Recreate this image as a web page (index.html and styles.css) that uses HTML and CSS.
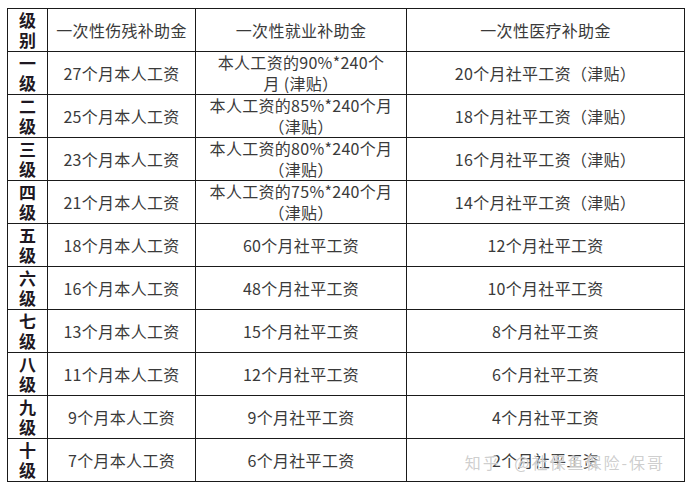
FILE: index.html
```html
<!DOCTYPE html>
<html lang="zh-CN">
<head>
<meta charset="utf-8">
<title>工伤补助金</title>
<link rel="stylesheet" href="styles.css">
</head>
<body>
<div class="wrap">
<table class="grid">
  <colgroup>
    <col class="c-level">
    <col class="c-a">
    <col class="c-b">
    <col class="c-c">
  </colgroup>
  <tr>
    <th class="lv">级<br>别</th>
    <td>一次性伤残补助金</td>
    <td>一次性就业补助金</td>
    <td>一次性医疗补助金</td>
  </tr>
  <tr>
    <th class="lv">一<br>级</th>
    <td>27个月本人工资</td>
    <td class="two">本人工资的90%*240个<br>月 (津贴）</td>
    <td>20个月社平工资（津贴）</td>
  </tr>
  <tr>
    <th class="lv">二<br>级</th>
    <td>25个月本人工资</td>
    <td class="two">本人工资的85%*240个月<br>（津贴）</td>
    <td>18个月社平工资（津贴）</td>
  </tr>
  <tr>
    <th class="lv">三<br>级</th>
    <td>23个月本人工资</td>
    <td class="two">本人工资的80%*240个月<br>（津贴）</td>
    <td>16个月社平工资（津贴）</td>
  </tr>
  <tr>
    <th class="lv">四<br>级</th>
    <td>21个月本人工资</td>
    <td class="two">本人工资的75%*240个月<br>（津贴）</td>
    <td>14个月社平工资（津贴）</td>
  </tr>
  <tr>
    <th class="lv">五<br>级</th>
    <td>18个月本人工资</td>
    <td>60个月社平工资</td>
    <td>12个月社平工资</td>
  </tr>
  <tr>
    <th class="lv">六<br>级</th>
    <td>16个月本人工资</td>
    <td>48个月社平工资</td>
    <td>10个月社平工资</td>
  </tr>
  <tr>
    <th class="lv">七<br>级</th>
    <td>13个月本人工资</td>
    <td>15个月社平工资</td>
    <td>8个月社平工资</td>
  </tr>
  <tr>
    <th class="lv">八<br>级</th>
    <td>11个月本人工资</td>
    <td>12个月社平工资</td>
    <td>6个月社平工资</td>
  </tr>
  <tr>
    <th class="lv">九<br>级</th>
    <td>9个月本人工资</td>
    <td>9个月社平工资</td>
    <td>4个月社平工资</td>
  </tr>
  <tr>
    <th class="lv">十<br>级</th>
    <td>7个月本人工资</td>
    <td>6个月社平工资</td>
    <td>2个月社平工资</td>
  </tr>
</table>
<div class="watermark">知乎 @社保鱼保险-保哥</div>
</div>
</body>
</html>
```
FILE: styles.css
```css
html, body {
  background: #ffffff;
}
body {
  margin: 8px 0 0 7px;
  font-family: "Noto Sans CJK SC", "Noto Sans", sans-serif;
  color: #3a3a3a;
}
.wrap {
  position: relative;
  width: 677px;
}
.grid {
  border-collapse: collapse;
  table-layout: fixed;
  width: 677px;
}
.c-level { width: 40px; }
.c-a { width: 148px; }
.c-b { width: 211px; }
.c-c { width: 278px; }
.grid th,
.grid td {
  border: 1px solid #1a1a1a;
  height: 42px;
  padding: 0;
  text-align: center;
  vertical-align: middle;
  font-size: 16px;
  line-height: 20px;
  letter-spacing: 0.3px;
  font-weight: 400;
  white-space: nowrap;
}
.grid th.lv {
  font-size: 17px;
  line-height: 20px;
  letter-spacing: 0;
  font-weight: 700;
  color: #1e1822;
}
.grid td.two {
  line-height: 21px;
}
.watermark {
  position: absolute;
  right: 19px;
  bottom: 11px;
  font-size: 16px;
  line-height: 18px;
  word-spacing: 8px;
  letter-spacing: 2px;
  color: rgba(165, 165, 165, 0.55);
  text-shadow: 0 0 1px #ffffff, 0 0 2px #ffffff;
  pointer-events: none;
}
```
